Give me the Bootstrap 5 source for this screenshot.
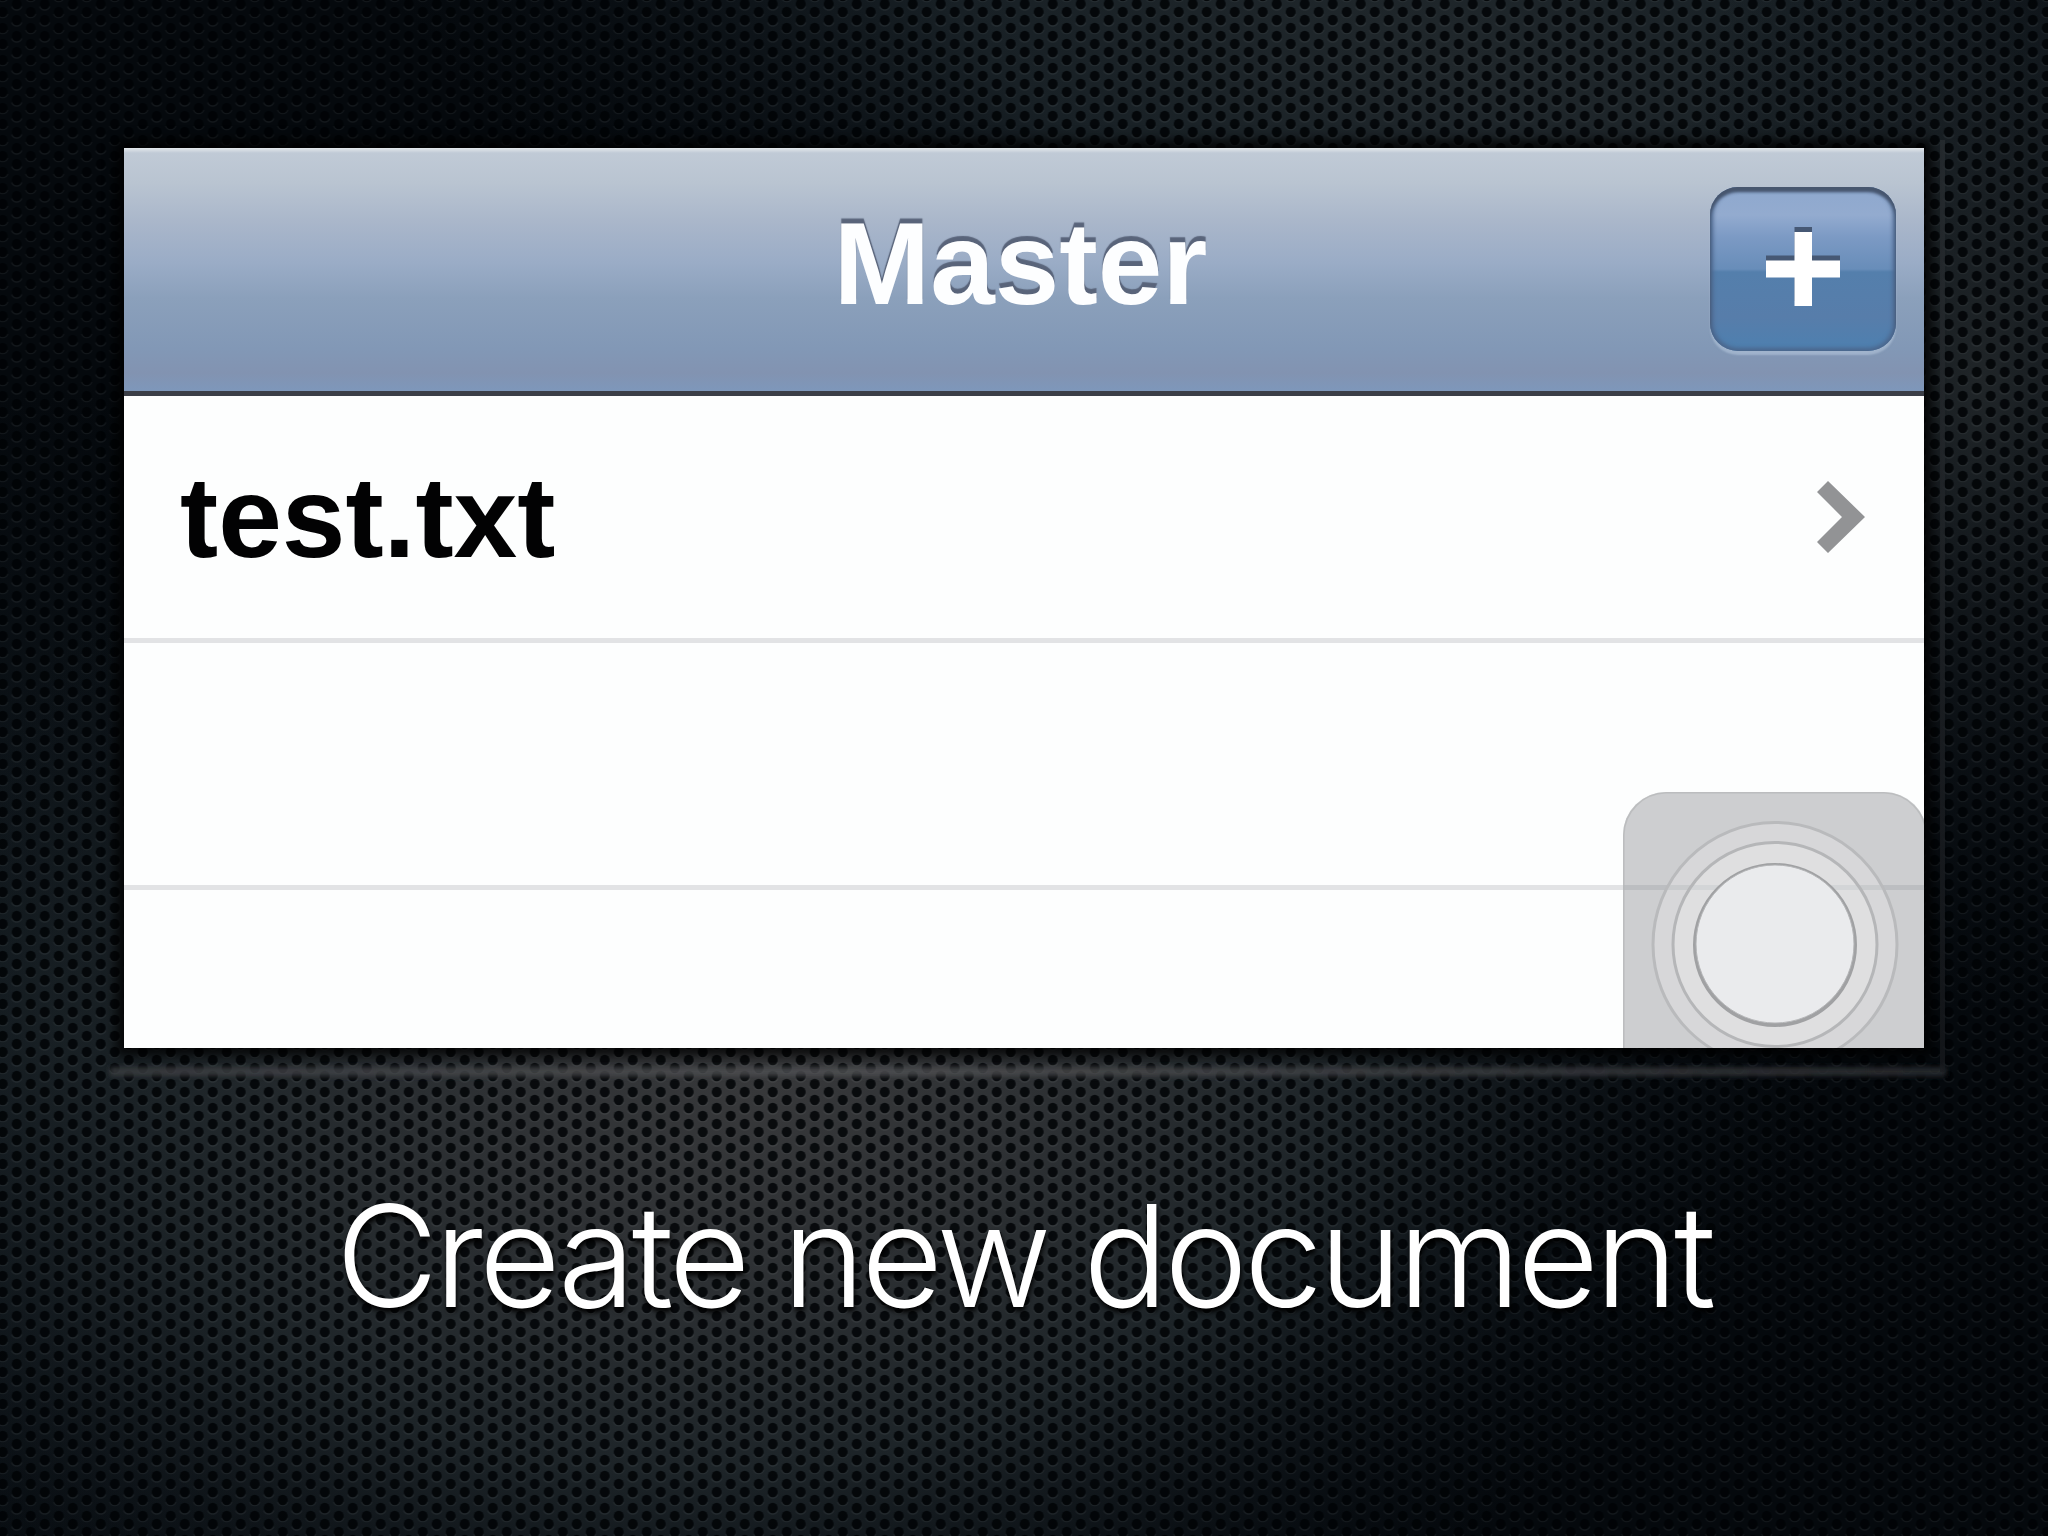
<!DOCTYPE html>
<html lang="en">
  <head>
    <meta charset="UTF-8" />
    <meta name="viewport" content="width=device-width, initial-scale=1" />
    <title>Create new document</title>
    <link
      href="https://cdn.jsdelivr.net/npm/bootstrap@5.3.3/dist/css/bootstrap.min.css"
      rel="stylesheet"
    />
    <style>
      body { background: #000; }
      .slide { height: 1536px; padding: 148px 124px 0; }
      .mesh { z-index: 0; }
      .phone {
        height: 900px;
        background: #fdfefe;
        box-shadow: 0 0 10px 8px rgba(0, 0, 0, .8);
      }
      .phone-bar {
        height: 248px;
        padding: 0 28px 2px 0;
        border-bottom: 5px solid #3b3e47;
        background: linear-gradient(#e4e9ec 0, #c0cad6 5px, #b9c4d1 35px, #a9b6ca 75px, #9aacc6 115px, #8ba0bb 150px, #8298b6 200px, #8293b1 225px, #7e97ba 242px);
      }
      .bar-title {
        font: bold 116px/130px "Liberation Sans", Arial, sans-serif;
        color: #fdfeff;
        text-shadow: 0 -5px 1px #59647a;
        padding-bottom: 10px;
        padding-left: 207px;
      }
      .add-btn {
        width: 186px;
        height: 164px;
        border: 0;
        border-radius: 28px;
        background: linear-gradient(#8ea8ce 0, #93abcf 28px, #7c9ac4 50px, #688db9 82px, #547fac 85px, #577daa 130px, #4d80b0 100%);
        box-shadow: inset 0 5px 3px #47566e, inset 0 0 4px 3px #4b658b, 0 4px 2px rgba(190, 207, 228, .5);
      }
      .file-row {
        height: 247px;
        padding: 0 59px 0 56px;
        border-bottom: 5px solid #e2e3e5;
      }
      .file-name {
        font: bold 114.5px/130px "Liberation Sans", Arial, sans-serif;
        color: #020203;
      }
      .touch { right: 0; bottom: 0; }
      .caption-text {
        font: 300 141px/166px Inter, "Helvetica Neue", sans-serif;
        color: #fff;
        margin-top: 125px;
        letter-spacing: -3.9px;
        white-space: nowrap;
        text-shadow: 1px 4px 5px #000;
      }
    </style>
  </head>
  <body>
    <main class="slide position-relative overflow-hidden">

      <!-- Perforated metal backdrop -->
      <svg class="mesh position-absolute top-0 start-0" width="2048" height="1536" viewBox="0 0 2048 1536" aria-hidden="true">
        <defs>
          <pattern id="holes" width="28" height="16" patternUnits="userSpaceOnUse" patternTransform="translate(2.7 4)">
            <g fill="none" stroke="#fff" stroke-opacity=".06" stroke-width="1.5">
              <path d="M-5 10a5.5 6 0 0 0 10 0M23 10a5.5 6 0 0 0 10 0M9 2.5a5.5 6 0 0 0 10 0" />
            </g>
            <g fill="#000205" fill-opacity=".84">
              <ellipse cx="0" cy="8" rx="5" ry="5.3" />
              <ellipse cx="28" cy="8" rx="5" ry="5.3" />
              <ellipse cx="14" cy="0" rx="5" ry="5.3" />
              <ellipse cx="14" cy="16" rx="5" ry="5.3" />
            </g>
          </pattern>
          <radialGradient id="glowLow" gradientUnits="userSpaceOnUse" cx="0" cy="0" r="1" gradientTransform="translate(760 1090) rotate(-8) scale(1080 680)">
            <stop offset="0" stop-color="#37383a" />
            <stop offset=".25" stop-color="#2e3134" />
            <stop offset=".55" stop-color="#1d2428" />
            <stop offset="1" stop-color="#0a1016" stop-opacity="0" />
          </radialGradient>
          <radialGradient id="glowTop" gradientUnits="userSpaceOnUse" cx="0" cy="0" r="1" gradientTransform="translate(1450 60) rotate(14) scale(1150 480)">
            <stop offset="0" stop-color="#20272b" />
            <stop offset=".45" stop-color="#182025" />
            <stop offset="1" stop-color="#0a1016" stop-opacity="0" />
          </radialGradient>
          <radialGradient id="glowRight" gradientUnits="userSpaceOnUse" cx="0" cy="0" r="1" gradientTransform="translate(1980 380) scale(320 640)">
            <stop offset="0" stop-color="#202528" />
            <stop offset="1" stop-color="#0a1016" stop-opacity="0" />
          </radialGradient>
          <radialGradient id="glowLeft" gradientUnits="userSpaceOnUse" cx="0" cy="0" r="1" gradientTransform="translate(60 1020) scale(420 640)">
            <stop offset="0" stop-color="#192226" />
            <stop offset="1" stop-color="#0a1016" stop-opacity="0" />
          </radialGradient>
          <filter id="soft" x="-5%" y="-200%" width="110%" height="500%"><feGaussianBlur stdDeviation="2.5" /></filter>
          <linearGradient id="rim" x1="0" x2="1">
            <stop offset="0" stop-color="#3a3c40" />
            <stop offset=".4" stop-color="#505153" />
            <stop offset="1" stop-color="#2b2d31" />
          </linearGradient>
          <linearGradient id="rimSide" x1="0" x2="0" y1="0" y2="1">
            <stop offset="0" stop-color="#2a2f33" />
            <stop offset="1" stop-color="#191b1f" />
          </linearGradient>
        </defs>
        <rect width="2048" height="1536" fill="#05090d" />
        <rect width="2048" height="1536" fill="url(#glowTop)" />
        <rect width="2048" height="1536" fill="url(#glowRight)" />
        <rect width="2048" height="1536" fill="url(#glowLeft)" />
        <rect width="2048" height="1536" fill="url(#glowLow)" />
        <rect width="2048" height="1536" fill="url(#holes)" />
        <!-- Lit edge round the picture's shadow -->
        <rect x="110" y="1067" width="1836" height="9" fill="url(#rim)" opacity=".85" filter="url(#soft)" />
        <rect x="1940" y="140" width="5" height="932" fill="url(#rimSide)" opacity=".7" />
      </svg>

      <!-- Phone screen -->
      <section class="phone position-relative overflow-visible">
        <header class="phone-bar d-flex align-items-center">
          <h1 class="bar-title flex-grow-1 text-center mb-0">Master</h1>
          <button type="button" class="add-btn p-0 flex-shrink-0" aria-label="Add">
            <svg class="d-block" width="186" height="164" viewBox="0 0 186 164">
              <path d="M84.5 40H102v28.500h28v17h-28V114H84.500V85.500H56v-17h28.500z" fill="#465874" />
              <path d="M84.500 45H102v28.500h28v17h-28V119H84.500V90.500H56v-17h28.500z" fill="#fff" />
            </svg>
          </button>
        </header>

        <div class="file-list">
          <div class="file-row d-flex align-items-center justify-content-between">
            <span class="file-name">test.txt</span>
            <svg width="52" height="76" viewBox="0 0 52 76" aria-hidden="true">
              <path d="M15 2L52 38L15 74L4 63L29 38L4 13z" fill="#929395" />
            </svg>
          </div>
          <div class="file-row"></div>
        </div>

        <!-- Floating touch button, cut off by the screen edge -->
        <svg class="touch position-absolute" width="301" height="256" viewBox="0 0 301 256" aria-hidden="true">
          <path d="M0 256V43A43 43 0 0 1 43 0H261A43 43 0 0 1 304 43V256z" fill="#85888c" fill-opacity=".4" />
          <path d="M.8 256V43A43 43 0 0 1 43 .8H261A43 43 0 0 1 303 43" fill="none" stroke="#b5b6b8" stroke-opacity=".7" stroke-width="1.6" />
          <circle cx="152" cy="152.500" r="122" fill="#fff" fill-opacity=".2" stroke="#b9babc" stroke-width="3" />
          <circle cx="152" cy="152.500" r="102" fill="#fff" fill-opacity=".2" stroke="#b5b6b8" stroke-width="3" />
          <circle cx="152" cy="153" r="80" fill="none" stroke="#a0a1a3" stroke-width="4" />
          <circle cx="152" cy="152" r="79" fill="#eaebed" stroke="#b4b5b7" stroke-width="1" />
        </svg>
      </section>

      <h2 class="caption-text position-relative text-center mb-0">Create new document</h2>
    </main>

    <script src="https://cdn.jsdelivr.net/npm/bootstrap@5.3.3/dist/js/bootstrap.bundle.min.js"></script>
  </body>
</html>
